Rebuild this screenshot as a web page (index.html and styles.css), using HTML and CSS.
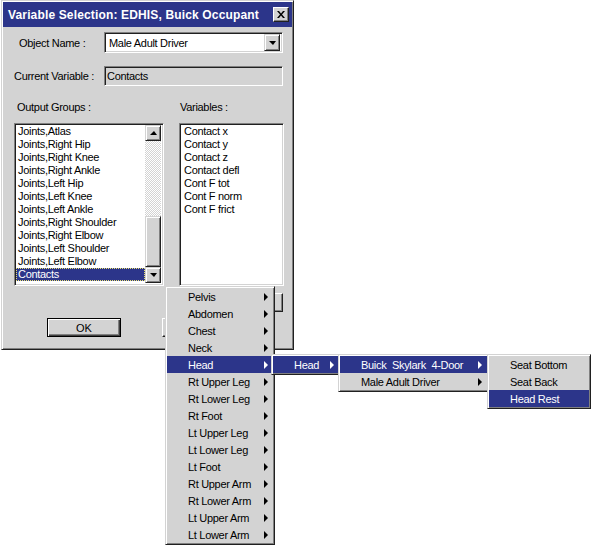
FILE: index.html
```html
<!DOCTYPE html>
<html lang="en">

<head>
    <meta charset="UTF-8">
    <meta name="viewport" content="width=device-width, initial-scale=1.0">
    <title>Variable Selection: EDHIS, Buick Occupant</title>
    <link rel="stylesheet" href="styles.css">
</head>

<body>
    <div class="dialog">
        <div class="titlebar">
            <span class="title">Variable Selection: EDHIS, Buick Occupant</span>
            <span class="close">
                <svg width="8" height="7" viewBox="0 0 8 7">
                    <path d="M0 0h2l2 2.5l2-2.5h2l-3 3.5l3 3.5h-2l-2-2.5l-2 2.5h-2l3-3.5z" fill="#000" />
                </svg>
            </span>
        </div>
        <div class="dialog-body">
            <div class="row row-object">
                <span class="label">Object Name :</span>
                <div class="combo">
                    <span class="combo-text">Male Adult Driver</span>
                    <span class="arrow-btn"><span class="tri-down"></span></span>
                </div>
            </div>
            <div class="row row-current">
                <span class="label">Current Variable :</span>
                <div class="field">Contacts</div>
            </div>
            <div class="lists">
                <div class="group-col">
                    <div class="caption">Output Groups :</div>
                    <div class="listbox">
                        <ul class="items">
                            <li>Joints,Atlas</li>
                            <li>Joints,Right Hip</li>
                            <li>Joints,Right Knee</li>
                            <li>Joints,Right Ankle</li>
                            <li>Joints,Left Hip</li>
                            <li>Joints,Left Knee</li>
                            <li>Joints,Left Ankle</li>
                            <li>Joints,Right Shoulder</li>
                            <li>Joints,Right Elbow</li>
                            <li>Joints,Left Shoulder</li>
                            <li>Joints,Left Elbow</li>
                            <li class="selected">Contacts</li>
                        </ul>
                        <div class="scrollbar">
                            <span class="arrow-btn"><span class="tri-up"></span></span>
                            <span class="track"><span class="thumb"></span></span>
                            <span class="arrow-btn"><span class="tri-down"></span></span>
                        </div>
                    </div>
                </div>
                <div class="var-col">
                    <div class="caption">Variables :</div>
                    <div class="listbox">
                        <ul class="items">
                            <li>Contact x</li>
                            <li>Contact y</li>
                            <li>Contact z</li>
                            <li>Contact defl</li>
                            <li>Cont F tot</li>
                            <li>Cont F norm</li>
                            <li>Cont F frict</li>
                        </ul>
                    </div>
                    <button class="btn side-btn"></button>
                </div>
            </div>
            <div class="buttons">
                <button class="btn btn-default">OK</button>
                <button class="btn btn-cancel"></button>
            </div>
        </div>
    </div>

    <div class="menu menu-parts">
        <div class="menu-item">Pelvis<span class="sub"></span></div>
        <div class="menu-item">Abdomen<span class="sub"></span></div>
        <div class="menu-item">Chest<span class="sub"></span></div>
        <div class="menu-item">Neck<span class="sub"></span></div>
        <div class="menu-item active">Head<span class="sub"></span></div>
        <div class="menu-item">Rt Upper Leg<span class="sub"></span></div>
        <div class="menu-item">Rt Lower Leg<span class="sub"></span></div>
        <div class="menu-item">Rt Foot<span class="sub"></span></div>
        <div class="menu-item">Lt Upper Leg<span class="sub"></span></div>
        <div class="menu-item">Lt Lower Leg<span class="sub"></span></div>
        <div class="menu-item">Lt Foot<span class="sub"></span></div>
        <div class="menu-item">Rt Upper Arm<span class="sub"></span></div>
        <div class="menu-item">Rt Lower Arm<span class="sub"></span></div>
        <div class="menu-item">Lt Upper Arm<span class="sub"></span></div>
        <div class="menu-item">Lt Lower Arm<span class="sub"></span></div>
    </div>

    <div class="menu menu-head">
        <div class="menu-item active">Head<span class="sub"></span></div>
    </div>

    <div class="menu menu-objects">
        <div class="menu-item active">Buick  Skylark  4-Door<span class="sub"></span></div>
        <div class="menu-item">Male Adult Driver<span class="sub"></span></div>
    </div>

    <div class="menu menu-contacts">
        <div class="menu-item">Seat Bottom</div>
        <div class="menu-item">Seat Back</div>
        <div class="menu-item active">Head Rest</div>
    </div>
</body>

</html>
```

FILE: styles.css
```css
body {
    position: relative;
    margin: 0;
    width: 594px;
    height: 549px;
    background-color: #fff;
    font-family: "Liberation Sans", Arial, sans-serif;
    font-size: 11px;
    letter-spacing: -0.3px;
    color: #000;
}

/* window frame */
.dialog {
    box-sizing: border-box;
    width: 293px;
    height: 350px;
    margin-left: 1px;
    padding: 1px;
    background-color: #d3d3d3;
    border: 1px solid;
    border-color: #d3d3d3 #202020 #202020 #d3d3d3;
    box-shadow: inset 1px 1px #fff, inset -1px -1px #808080;
}

.titlebar {
    display: flex;
    align-items: center;
    height: 25px;
    padding-left: 5px;
    background-color: #2c358a;
    color: #fff;
}

.title {
    flex: 1;
    font-weight: bold;
    font-size: 12px;
    letter-spacing: 0.15px;
}

.close {
    display: flex;
    align-items: center;
    justify-content: center;
    box-sizing: border-box;
    width: 16px;
    height: 15px;
    margin-right: 3px;
    background-color: #d3d3d3;
    border: 1px solid;
    border-color: #fff #202020 #202020 #fff;
    box-shadow: inset -1px -1px #808080;
}

.row {
    display: flex;
    align-items: center;
}

.row-object {
    height: 21px;
    margin-top: 5px;
}

.row-object .label {
    width: 85px;
    margin-left: 16px;
}

.row-current {
    height: 20px;
    margin-top: 13px;
}

.row-current .label {
    width: 90px;
    margin-left: 11px;
}

/* sunken boxes */
.combo,
.field,
.listbox {
    box-sizing: border-box;
    border: 1px solid;
    border-color: #808080 #fff #fff #808080;
    box-shadow: inset 1px 1px #202020, inset -1px -1px #d3d3d3;
}

.combo {
    display: flex;
    align-items: center;
    width: 179px;
    height: 21px;
    padding: 2px;
    background-color: #fff;
}

.combo-text {
    flex: 1;
    padding-left: 2px;
}

.field {
    width: 179px;
    height: 20px;
    padding: 3px 0 0 2px;
    line-height: 13px;
}

.arrow-btn {
    display: flex;
    align-items: center;
    justify-content: center;
    box-sizing: border-box;
    width: 16px;
    height: 17px;
    background-color: #d3d3d3;
    border: 1px solid;
    border-color: #d3d3d3 #202020 #202020 #d3d3d3;
    box-shadow: inset 1px 1px #fff, inset -1px -1px #808080;
}

.tri-down {
    border-top: 4px solid #000;
    border-left: 4px solid transparent;
    border-right: 3px solid transparent;
}

.tri-up {
    border-bottom: 4px solid #000;
    border-left: 4px solid transparent;
    border-right: 3px solid transparent;
}

/* list area */
.lists {
    display: flex;
    margin-top: 15px;
}

.caption {
    height: 13px;
    line-height: 13px;
    margin-bottom: 9px;
}

.group-col {
    width: 150px;
    margin-left: 11px;
}

.group-col .caption {
    padding-left: 3px;
}

.var-col {
    width: 105px;
    margin-left: 15px;
}

.var-col .caption {
    padding-left: 1px;
}

.listbox {
    display: flex;
    height: 163px;
    padding: 1px 2px 2px 1px;
    background-color: #fff;
}

.items {
    flex: 1;
    margin: 0;
    padding: 0;
    list-style: none;
}

.items li {
    height: 13px;
    line-height: 13px;
    padding-left: 2px;
    white-space: nowrap;
}

.var-col .items li {
    padding-left: 3px;
}

.items li.selected {
    background-color: #2c358a;
    color: #fff;
    outline: 1px dotted #e8e070;
    outline-offset: -1px;
}

.scrollbar {
    display: flex;
    flex-direction: column;
    width: 16px;
}

.scrollbar .arrow-btn {
    height: 16px;
}

.track {
    flex: 1;
    display: flex;
    flex-direction: column;
    justify-content: flex-end;
    background: repeating-conic-gradient(#d3d3d3 0 25%, #fff 0 50%) 0 0 / 2px 2px;
}

.thumb {
    box-sizing: border-box;
    height: 51px;
    background-color: #d3d3d3;
    border: 1px solid;
    border-color: #d3d3d3 #202020 #202020 #d3d3d3;
    box-shadow: inset 1px 1px #fff, inset -1px -1px #808080;
}

/* buttons */
.btn {
    box-sizing: border-box;
    height: 19px;
    padding: 0;
    background-color: #d3d3d3;
    font: inherit;
    color: #000;
    border: 1px solid;
    border-color: #fff #202020 #202020 #fff;
    box-shadow: inset -1px -1px #808080;
}

.side-btn {
    display: block;
    width: 104px;
    margin-top: 7px;
}

.buttons {
    display: flex;
    margin-top: 6px;
}

.btn-default {
    width: 74px;
    margin-left: 44px;
    border-color: #000;
    box-shadow: inset 1px 1px #fff, inset -1px -1px #404040, inset -2px -2px #808080;
}

.btn-cancel {
    width: 74px;
    margin-left: 41px;
}

/* popup menus */
.menu {
    position: absolute;
    box-sizing: border-box;
    padding: 1px;
    background-color: #d3d3d3;
    border: 1px solid;
    border-color: #d3d3d3 #202020 #202020 #d3d3d3;
    box-shadow: inset 1px 1px #fff, inset -1px -1px #808080;
}

.menu-item {
    display: flex;
    align-items: center;
    height: 17px;
    padding-left: 21px;
    white-space: pre;
}

.menu-item.active {
    background-color: #2c358a;
    color: #fff;
}

.sub {
    margin-left: auto;
    margin-right: 5px;
    border-left: 4px solid #000;
    border-top: 4px solid transparent;
    border-bottom: 4px solid transparent;
}

.menu-item.active .sub {
    border-left-color: #fff;
}

.menu-parts {
    left: 165px;
    top: 286px;
    width: 110px;
}

.menu-head {
    left: 271px;
    top: 354px;
    width: 70px;
}

.menu-objects {
    left: 338px;
    top: 354px;
    width: 152px;
}

.menu-objects .sub {
    margin-right: 6px;
}

.menu-contacts {
    left: 487px;
    top: 354px;
    width: 104px;
}
```
